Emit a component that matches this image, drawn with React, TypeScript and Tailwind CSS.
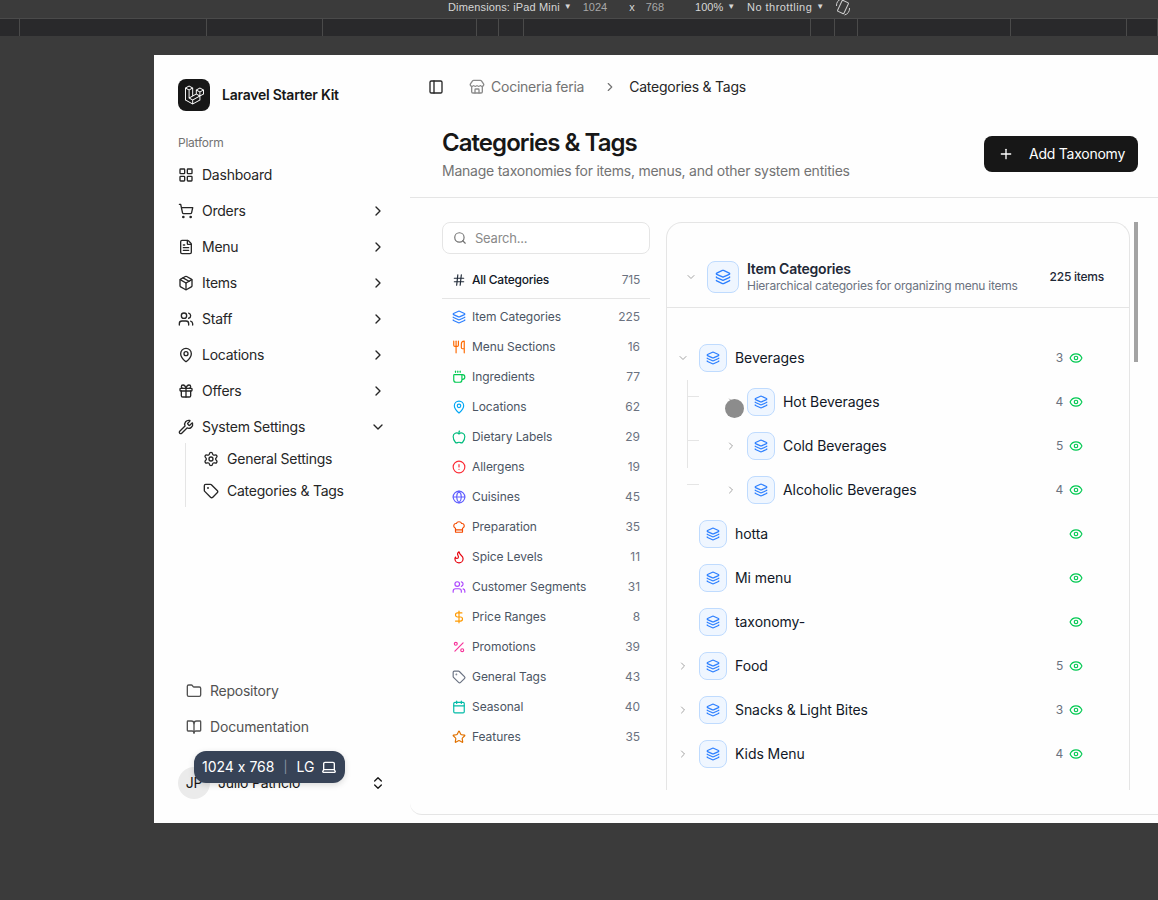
import {
  Apple, BookOpen, Calendar, ChefHat, ChevronDown, ChevronRight, ChevronsUpDown, CircleAlert, Coffee, DollarSign,
  Eye, FileText, Flame, Folder, Gift, Globe, Hash, Laptop, Layers, LayoutGrid, MapPin, Package, PanelLeft, Percent,
  Plus, Search, Settings, ShoppingCart, Star, Store, Tag, Users, Utensils, Wrench,
} from 'lucide-react'

const navItems = [
  { label: 'Dashboard', icon: LayoutGrid },
  { label: 'Orders', icon: ShoppingCart, chevron: true },
  { label: 'Menu', icon: FileText, chevron: true },
  { label: 'Items', icon: Package, chevron: true },
  { label: 'Staff', icon: Users, chevron: true },
  { label: 'Locations', icon: MapPin, chevron: true },
  { label: 'Offers', icon: Gift, chevron: true },
]

const categories = [
  { label: 'Item Categories', count: 225, icon: Layers, color: 'text-blue-500' },
  { label: 'Menu Sections', count: 16, icon: Utensils, color: 'text-orange-500' },
  { label: 'Ingredients', count: 77, icon: Coffee, color: 'text-green-500' },
  { label: 'Locations', count: 62, icon: MapPin, color: 'text-sky-500' },
  { label: 'Dietary Labels', count: 29, icon: Apple, color: 'text-emerald-500' },
  { label: 'Allergens', count: 19, icon: CircleAlert, color: 'text-red-500' },
  { label: 'Cuisines', count: 45, icon: Globe, color: 'text-indigo-500' },
  { label: 'Preparation', count: 35, icon: ChefHat, color: 'text-orange-600' },
  { label: 'Spice Levels', count: 11, icon: Flame, color: 'text-red-600' },
  { label: 'Customer Segments', count: 31, icon: Users, color: 'text-purple-500' },
  { label: 'Price Ranges', count: 8, icon: DollarSign, color: 'text-amber-500' },
  { label: 'Promotions', count: 39, icon: Percent, color: 'text-pink-500' },
  { label: 'General Tags', count: 43, icon: Tag, color: 'text-gray-500' },
  { label: 'Seasonal', count: 40, icon: Calendar, color: 'text-teal-500' },
  { label: 'Features', count: 35, icon: Star, color: 'text-amber-600' },
]

const treeRows = [
  { label: 'Beverages', count: 3, open: true },
  { label: 'Hot Beverages', count: 4, child: true },
  { label: 'Cold Beverages', count: 5, child: true },
  { label: 'Alcoholic Beverages', count: 4, child: true },
  { label: 'hotta', leaf: true },
  { label: 'Mi menu', leaf: true },
  { label: 'taxonomy-', leaf: true },
  { label: 'Food', count: 5 },
  { label: 'Snacks & Light Bites', count: 3 },
  { label: 'Kids Menu', count: 4 },
]

const rulerSegments = [20, 187, 116, 154, 22, 25, 287, 24, 23, 153, 116, 31]

function LaravelMark() {
  return (
    <svg viewBox="0 0 40 42" className="w-[19px] h-5 text-white" fill="currentColor">
      <path
        fillRule="evenodd"
        clipRule="evenodd"
        d="M17.2 5.633 8.6.855 0 5.633v26.51l16.2 9 16.2-9v-8.442l7.6-4.223V9.856l-8.6-4.777-8.6 4.777V18.3l-5.6 3.111V5.633ZM38 18.301l-5.6 3.11v-6.157l5.6-3.11V18.3Zm-1.06-7.856-5.54 3.078-5.54-3.079 5.54-3.078 5.54 3.079ZM24.8 18.3v-6.157l5.6 3.111v6.158L24.8 18.3Zm-1 1.732 5.54 3.078-13.14 7.302-5.54-3.078 13.14-7.3v-.002Zm-16.2 7.89 7.6 4.222V38.3L2 30.966V7.92l5.6 3.111v16.892ZM8.6 9.3 3.06 6.222 8.6 3.143l5.54 3.08L8.6 9.3Zm21.8 15.51-13.2 7.334V38.3l13.2-7.334v-6.156ZM9.6 11.034l5.6-3.11v14.6l-5.6 3.11v-14.6Z"
      />
    </svg>
  )
}

function DevToolsBar() {
  return (
    <div className="font-['Liberation_Sans',sans-serif] tracking-normal">
      <div className="h-[19px] border-b border-[#4a4a4a] flex items-center pb-[4px] pl-[448px] text-[11px] text-[#d6d6d6] whitespace-nowrap">
        <span className="tracking-[0.14px]">Dimensions: iPad Mini</span>
        <span className="ml-[4px] text-[8px]">▼</span>
        <span className="ml-[11px] text-[#a8a8a8]">1024</span>
        <span className="ml-[22px]">x</span>
        <span className="ml-[11px] text-[#a8a8a8]">768</span>
        <span className="ml-[31px]">100%</span>
        <span className="ml-[4px] text-[8px]">▼</span>
        <span className="ml-[12px] tracking-[0.45px]">No throttling</span>
        <span className="ml-[4px] text-[8px]">▼</span>
        <svg viewBox="0 0 16 20" className="ml-[11px] w-4 h-5 text-[#cfcfcf]" fill="none" stroke="currentColor" strokeWidth="1">
          <rect x="4.5" y="4" width="7" height="12" rx="1" transform="rotate(25 8 10)" />
          <path d="M1.5 9a7 7 0 0 1 5-7M14.5 11a7 7 0 0 1-5 7" />
        </svg>
      </div>
      <div className="h-[18px] bg-[#29292b] flex border-b border-[#3b3b3b]">
        {rulerSegments.map((w, i) => (
          <div key={i} className="h-full border-r border-[#4a4a4a] shrink-0" style={{ width: w }} />
        ))}
      </div>
    </div>
  )
}

function Sidebar() {
  return (
    <aside className="relative w-[256px] shrink-0 flex flex-col px-6 pt-6 pb-6">
      <div className="flex items-center gap-3 h-8">
        <div className="w-8 h-8 rounded-lg bg-[#171717] flex items-center justify-center">
          <LaravelMark />
        </div>
        <span className="text-sm font-semibold text-[#171717]">Laravel Starter Kit</span>
      </div>

      <div className="mt-[24px] text-xs leading-4 text-[#737373]">Platform</div>

      <nav className="mt-[6px]">
        {navItems.map((item) => (
          <div key={item.label} className="h-9 flex items-center text-sm text-[#262626]">
            <item.icon className="w-4 h-4 mr-2" strokeWidth={2} />
            <span>{item.label}</span>
            {item.chevron && <ChevronRight className="w-4 h-4 ml-auto" />}
          </div>
        ))}
        <div className="h-9 flex items-center text-sm text-[#262626]">
          <Wrench className="w-4 h-4 mr-2" />
          <span>System Settings</span>
          <ChevronDown className="w-4 h-4 ml-auto" />
        </div>
        <div className="ml-[7px] -mt-[2px] border-l border-[#e5e5e5] pl-[17px] h-[64px]">
          <div className="h-8 flex items-center gap-2 text-sm text-[#262626]">
            <Settings className="w-4 h-4" />
            General Settings
          </div>
          <div className="h-8 flex items-center gap-2 text-sm text-[#262626]">
            <Tag className="w-4 h-4" />
            Categories &amp; Tags
          </div>
        </div>
      </nav>

      <div className="mt-auto pl-2">
        <div className="h-9 flex items-center gap-2 text-sm text-[#525252]">
          <Folder className="w-4 h-4" />
          Repository
        </div>
        <div className="h-9 flex items-center gap-2 text-sm text-[#525252] tracking-[-0.01em]">
          <BookOpen className="w-4 h-4" />
          Documentation
        </div>
      </div>

      <div className="mt-[22px] h-8 flex items-center text-sm text-[#171717]">
        <div className="w-8 h-8 rounded-full bg-[#ebebeb] flex items-center justify-center mr-2">JP</div>
        <span>Julio Patricio</span>
        <ChevronsUpDown className="w-4 h-4 ml-auto" />
      </div>

      {/* device size badge from the responsive viewer */}
      <div className="absolute left-10 top-[696px] h-8 px-2 rounded-xl bg-[#374357] text-white text-sm tracking-normal flex items-center shadow-[0_2px_6px_rgba(0,0,0,0.15)] whitespace-nowrap [font-feature-settings:'calt'_0]">
        <span>1024 x 768</span>
        <span className="mx-[9px] text-[#8b95a5] text-xs">|</span>
        <span>LG</span>
        <Laptop className="w-4 h-4 ml-[7px]" />
      </div>
    </aside>
  )
}

function CategoryColumn() {
  return (
    <div className="w-[208px] shrink-0">
      <div className="h-8 rounded-lg border border-[#e5e5e5] bg-white flex items-center px-[10px] gap-2">
        <Search className="w-[14px] h-[14px] text-[#737373]" />
        <span className="text-[13px] text-[#8a8a8a] pt-px">Search...</span>
      </div>
      <div className="mt-[9px] h-9 border-b border-[#e5e5e5] flex items-center px-[10px] pb-[2px] text-xs">
        <Hash className="w-[14px] h-[14px] text-[#1f2937] mr-[6px]" />
        <span className="font-medium text-[#111827]">All Categories</span>
        <span className="ml-auto text-[#6b7280]">715</span>
      </div>
      <div className="mt-[3px]">
        {categories.map((c) => (
          <div key={c.label} className="h-[30px] flex items-center px-[10px] text-xs tracking-[-0.005em]">
            <c.icon className={`w-[14px] h-[14px] mr-[6px] ${c.color}`} />
            <span className="text-[#4b5563]">{c.label}</span>
            <span className="ml-auto text-[#6b7280]">{c.count}</span>
          </div>
        ))}
      </div>
    </div>
  )
}

function TreeRow({ row }: { row: (typeof treeRows)[number] }) {
  return (
    <div className={`relative h-7 flex items-center ${row.child ? 'pl-12' : ''}`}>
      {row.child && <div className="absolute left-[10px] top-2 w-3 h-px bg-[#e5e5e5]" />}
      <div className="w-3 mr-[10px] shrink-0">
        {!row.leaf &&
          (row.open ? (
            <ChevronDown className="w-3 h-3 text-[#a3a3a3]" />
          ) : (
            <ChevronRight className="w-3 h-3 text-[#a3a3a3]" />
          ))}
      </div>
      <div className="w-7 h-7 rounded-lg bg-[#eff6ff] border border-[#bfdbfe] flex items-center justify-center mr-2 shrink-0">
        <Layers className="w-[14px] h-[14px] text-blue-500" />
      </div>
      <span className="text-sm tracking-[-0.005em] text-[#111827]">{row.label}</span>
      {row.count !== undefined && <span className="ml-auto text-xs text-[#6b7280]">{row.count}</span>}
      <Eye className={`w-[14px] h-[14px] text-green-500 ${row.count === undefined ? 'ml-auto' : 'ml-[6px]'}`} />
    </div>
  )
}

function TreePanel() {
  return (
    <div className="flex-1 min-w-0 relative flex h-[568px] overflow-hidden">
      <div className="w-[464px] shrink-0 border-x border-t border-[#e5e5e5] rounded-t-2xl">
        <div className="pt-[36px] pb-[13px] pl-[18px] pr-[25px] border-b border-[#e5e5e5] flex items-center">
          <ChevronDown className="w-3 h-3 text-[#a3a3a3] mr-[10px]" />
          <div className="w-8 h-8 rounded-lg bg-[#eff6ff] border border-[#bfdbfe] flex items-center justify-center mr-2">
            <Layers className="w-4 h-4 text-blue-500" />
          </div>
          <div className="pt-[2px]">
            <div className="text-sm leading-4 font-semibold text-[#1f2937]">Item Categories</div>
            <div className="text-xs leading-4 text-[#6b7280] mt-px">Hierarchical categories for organizing menu items</div>
          </div>
          <span className="ml-auto text-xs font-medium text-[#1f2937]">225 items</span>
        </div>
        <div className="relative pt-9 pl-[10px] pr-[46px] flex flex-col gap-4">
          {/* tree connector */}
          <div className="absolute left-5 top-[72px] w-px h-[88px] bg-[#e5e5e5]" />
          {treeRows.map((row) => (
            <TreeRow key={row.label} row={row} />
          ))}
        </div>
      </div>
      <div className="ml-1 w-1 h-[140px] bg-[#a3a3a3]" />
      {/* pointer of the screen recording */}
      <div className="absolute left-[59px] top-[177px] w-[19px] h-[19px] rounded-full bg-[#8c8c8c]" />
    </div>
  )
}

export default function App() {
  return (
    <div className="w-full h-[900px] overflow-hidden bg-[#3b3b3b] font-['Inter',sans-serif] tracking-[-0.015em]">
      <DevToolsBar />
      <div className="mt-[18px] ml-[154px] w-[1024px] h-[768px] bg-[#fefefe] flex">
        <Sidebar />
        <main className="flex-1 min-w-0 mr-2 mb-2 rounded-bl-xl border-b border-[#e5e5e5] flex flex-col overflow-hidden">
          <header className="h-16 flex items-center pl-[18px] shrink-0 text-sm">
            <PanelLeft className="w-4 h-4 text-[#262626]" />
            <Store className="w-4 h-4 text-[#8a8a8a] ml-[25px]" />
            <span className="ml-[6px] text-[#737373]">Cocineria feria</span>
            <ChevronRight className="w-[14px] h-[14px] text-[#737373] ml-[19px]" />
            <span className="ml-[12px] text-[#262626]">Categories &amp; Tags</span>
          </header>
          <div className="h-[79px] border-b border-[#e5e5e5] px-8 flex justify-between shrink-0">
            <div>
              <h1 className="text-2xl leading-8 font-semibold text-[#171717] mt-2 tracking-[-0.95px]">Categories &amp; Tags</h1>
              <p className="text-sm leading-5 text-[#737373] mt-[2px]">Manage taxonomies for items, menus, and other system entities</p>
            </div>
            <button className="mt-[17px] h-9 w-[154px] rounded-lg bg-[#171717] text-white text-sm flex items-center pl-[14px]">
              <Plus className="w-4 h-4 mr-[15px]" />
              Add Taxonomy
            </button>
          </div>
          <div className="flex gap-4 px-8 pt-6">
            <CategoryColumn />
            <TreePanel />
          </div>
        </main>
      </div>
    </div>
  )
}
